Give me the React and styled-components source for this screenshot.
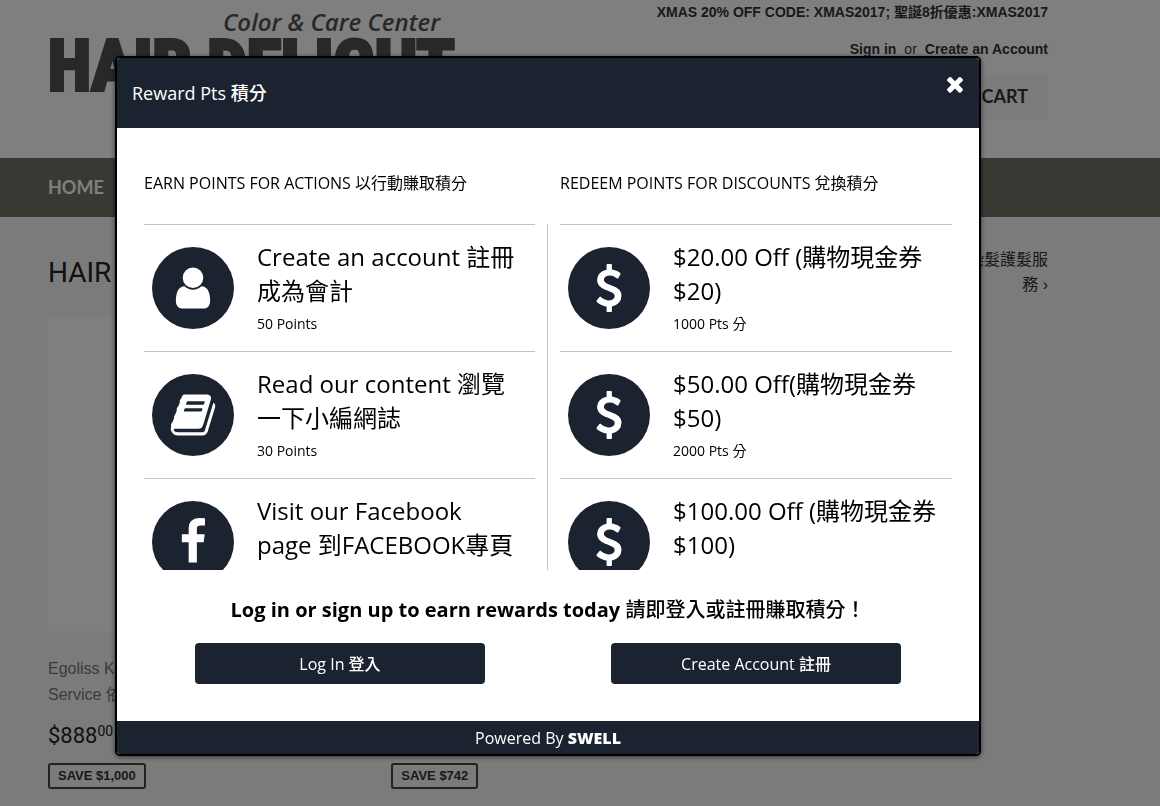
import styled, { createGlobalStyle } from "styled-components";

const GlobalStyle = createGlobalStyle`
  * {
    box-sizing: border-box;
  }
  body {
    margin: 0;
    background: #f6f6f6;
    color: #333;
    font-family: "Liberation Sans", "Noto Sans CJK TC", sans-serif;
    font-size: 16px;
  }
  h1, h2, h3, p, ul {
    margin: 0;
    padding: 0;
  }
  ul {
    list-style: none;
  }
  a {
    color: inherit;
    text-decoration: none;
  }
  button {
    border: 0;
    cursor: pointer;
    font-family: inherit;
  }
`;

/* ---------- shop page ---------- */

const Page = styled.div`
  height: 100vh;
  overflow: hidden;
`;

const Header = styled.header`
  display: flex;
  justify-content: space-between;
  height: 158px;
  padding: 0 112px 0 48px;
  background: #fff;
`;

const Logo = styled.a`
  display: flex;
  flex-direction: column;
  width: 400px;
  padding-top: 4px;
  color: #505050;
  white-space: nowrap;
`;

const LogoTagline = styled.span`
  align-self: flex-end;
  padding-right: 8px;
  font: italic 600 24px/36px "Open Sans", sans-serif;
`;

const LogoName = styled.span`
  font: bold 70px/52px "Roboto Condensed", "Open Sans Condensed", sans-serif;
  -webkit-text-stroke: 4px currentColor;
`;

const HeaderSide = styled.div`
  display: flex;
  flex-direction: column;
  align-items: flex-end;
  font-size: 14px;
  line-height: 24px;
`;

const Promo = styled.p`
  font-weight: bold;
`;

const Account = styled.p`
  display: flex;
  gap: 8px;
  padding: 13px 0 14px;

  a {
    font-weight: bold;
  }
`;

const Cart = styled.a`
  height: 44px;
  padding: 0 20px;
  border-radius: 2px;
  background: #f6f6f6;
  font: bold 18px/42px Lato, sans-serif;
`;

const Nav = styled.nav`
  padding: 0 48px;
  background: #707266;
  color: #fff;
  font: bold 18px/59px Lato, sans-serif;
`;

const Main = styled.main`
  padding: 30px 112px 0 48px;
`;

const SectionHead = styled.div`
  display: flex;
  justify-content: space-between;
  height: 71px;

  h1 {
    font: 28px/52px Roboto, sans-serif;
    color: #222;
  }
  a {
    width: 80px;
    line-height: 25px;
    text-align: right;
  }
`;

const Products = styled.div`
  display: grid;
  grid-template-columns: repeat(3, 1fr);
  gap: 30px;
`;

const Product = styled.article`
  display: flex;
  flex-direction: column;
`;

const Photo = styled.div`
  aspect-ratio: 1;
  margin-bottom: 25px;
  background: #fff;
`;

const ProductName = styled.p`
  width: 96px;
  color: #777;
  line-height: 26px;
  white-space: nowrap;
`;

const Price = styled.p`
  display: flex;
  padding: 11px 0 10px;
  color: #222;
  font: 22px/34px Roboto, sans-serif;

  sup {
    font-size: 14px;
    line-height: 24px;
  }
`;

const Saving = styled.span`
  align-self: flex-start;
  margin-top: auto;
  padding: 0 8px;
  border: 2px solid #444;
  border-radius: 3px;
  font-size: 13px;
  font-weight: bold;
  line-height: 22px;
`;

/* ---------- rewards dialog ---------- */

const Overlay = styled.div`
  position: fixed;
  inset: 0;
  display: flex;
  justify-content: center;
  align-items: flex-start;
  padding: 56px 64px 0 0;
  background: rgba(0, 0, 0, 0.5);
`;

const Dialog = styled.section`
  flex: 0 1 866px;
  border: 2px solid #000;
  border-radius: 5px;
  overflow: hidden;
  background: #fff;
  box-shadow: 0 1px 5px rgba(0, 0, 0, 0.6);
  color: #000;
  font-family: "Open Sans", "Noto Sans CJK TC", sans-serif;
`;

const DialogHead = styled.header`
  display: flex;
  justify-content: space-between;
  align-items: flex-start;
  padding: 14px 12px 14px 15px;
  background: #1c2330;
  color: #fff;

  h2 {
    font-size: 18px;
    font-weight: 500;
    line-height: 42px;
  }
`;

const Close = styled.button`
  display: flex;
  padding: 0;
  background: none;
  color: #fff;
`;

const Columns = styled.div`
  display: grid;
  grid-template-columns: 1fr 1fr;
  padding: 0 15px;
`;

const ColumnTitle = styled.h3`
  padding: 43px 12px 29px;
  font-size: 16px;
  font-weight: normal;
  line-height: 24px;
`;

const List = styled.ul`
  height: 346px;
  padding: 0 12px;
  overflow: hidden;
  border-right: ${(props) => (props.$divided ? "1px solid #c4c4c4" : "0")};
`;

const Row = styled.li`
  display: flex;
  gap: 23px;
  height: 127px;
  padding: 15px 15px 0 8px;
  border-top: 1px solid #c4c4c4;

  h4 {
    margin: 0;
    font-size: 24px;
    font-weight: normal;
    line-height: 34px;
  }
  p {
    font-size: 14px;
    line-height: 32px;
  }
`;

const Badge = styled.span`
  flex: none;
  display: flex;
  align-items: center;
  justify-content: center;
  width: 82px;
  height: 82px;
  margin-top: 7px;
  border-radius: 50%;
  background: #1c2330;
  color: #fff;
`;

const Invite = styled.p`
  padding: 24px 0 18px;
  font-size: 20px;
  font-weight: bold;
  line-height: 31px;
  text-align: center;

  span {
    font-weight: 500;
  }
`;

const Actions = styled.div`
  display: grid;
  grid-template-columns: 1fr 1fr;
  justify-items: center;
  padding: 0 15px 37px;
`;

const Action = styled.button`
  width: 290px;
  padding: 1px 0 0;
  border-radius: 4px;
  background: #1c2330;
  color: #fff;
  font-size: 16px;
  font-weight: 500;
  line-height: 40px;
`;

const DialogFoot = styled.footer`
  padding-top: 1px;
  background: #1c2330;
  color: #fff;
  font-size: 16px;
  line-height: 32px;
  text-align: center;

  b {
    font-weight: 800;
  }
`;

const icons = {
  close:
    "M1490 1322q0 40-28 68l-136 136q-28 28-68 28t-68-28l-294-294-294 294q-28 28-68 28t-68-28l-136-136q-28-28-28-68t28-68l294-294-294-294q-28-28-28-68t28-68l136-136q28-28 68-28t68 28l294 294 294-294q28-28 68-28t68 28l136 136q28 28 28 68t-28 68l-294 294 294 294q28 28 28 68z",
  user: "M1536 1399q0 109-62.5 187t-150.5 78h-854q-88 0-150.5-78t-62.5-187q0-85 8.5-160.5t31.5-152 58.5-131 94-89 134.5-34.5q131 128 313 128t313-128q76 0 134.5 34.5t94 89 58.5 131 31.5 152 8.5 160.5zm-256-887q0 159-112.5 271.5t-271.5 112.5-271.5-112.5-112.5-271.5 112.5-271.5 271.5-112.5 271.5 112.5 112.5 271.5z",
  book: "M1703 478q40 57 18 129l-275 906q-19 64-76.5 107.5t-122.5 43.5h-923q-77 0-148.5-53.5t-99.5-131.5q-24-67-2-127 0-4 3-27t4-37q1-8-3-21.5t-3-19.5q2-11 8-21t16.5-23.5 16.5-23.5q23-38 45-91.5t30-91.5q3-10 .5-30t-.5-28q3-11 17-28t17-23q21-36 42-92t25-90q1-9-2.5-32t.5-28q4-13 22-30.5t22-22.5q19-26 42.5-84.5t27.5-96.5q1-8-3-25.5t-2-26.5q2-8 9-18t18-23 17-21q8-12 16.5-30.5t15-35 16-36 19.5-32 26.5-23.5 36-11.5 47.5 5.5l-1 3q38-9 51-9h761q74 0 114 56t18 130l-274 906q-36 119-71.5 153.5t-128.5 34.5h-869q-27 0-38 15-11 16-1 43 24 70 144 70h923q29 0 56-15.5t35-41.5l300-987q7-22 5-57 38 15 59 43zm-1064 2q-4 13 2 22.5t20 9.5h608q13 0 25.5-9.5t16.5-22.5l21-64q4-13-2-22.5t-20-9.5h-608q-13 0-25.5 9.5t-16.5 22.5zm-83 256q-4 13 2 22.5t20 9.5h608q13 0 25.5-9.5t16.5-22.5l21-64q4-13-2-22.5t-20-9.5h-608q-13 0-25.5 9.5t-16.5 22.5z",
  facebook:
    "M1343 12v264h-157q-86 0-116 36t-30 108v189h293l-39 296h-254v759h-306v-759h-255v-296h255v-218q0-186 104-288.5t277-102.5q147 0 228 12z",
  dollar:
    "M1362 1185q0 153-99.5 263.5t-258.5 136.5v175q0 14-9 23t-23 9h-135q-13 0-22.5-9.5t-9.5-22.5v-175q-66-9-127.5-31t-101.5-44.5-74-48-46.5-37.5-17.5-18q-17-21-2-41l103-135q7-10 23-12 15-2 24 9l2 2q113 99 243 125 37 8 74 8 81 0 142.5-43t61.5-122q0-28-15-53t-33.5-42-58.5-37.5-66-32-80-32.5q-39-16-61.5-25t-61.5-26.5-62.5-31-56.5-35.5-53.5-42.5-43.5-49-35.5-58-21-66.5-8.5-78q0-138 98-242t255-134v-180q0-13 9.5-22.5t22.5-9.5h135q14 0 23 9t9 23v176q57 6 110.5 23t87 33.5 63.5 37.5 39 29 15 14q17 18 5 38l-81 146q-8 15-23 16-14 3-27-7-3-3-14.5-12t-39-26.5-58.5-32-74.5-26-85.5-11.5q-95 0-155 43t-60 111q0 26 8.5 48t29.5 41.5 39.5 33 56 31 60.5 27 70 27.5q53 20 81 31.5t76 35 75.5 42.5 62 50 53 63.5 31.5 76.5 13 94z",
};

const Icon = ({ name, size = 48 }) => (
  <svg
    width={size}
    height={size}
    viewBox="0 0 1792 1792"
    fill="currentColor"
    aria-hidden="true"
  >
    <path d={icons[name]} />
  </svg>
);

const earn = [
  { icon: "user", title: "Create an account 註冊成為會計", points: "50 Points" },
  { icon: "book", title: "Read our content 瀏覽一下小編網誌", points: "30 Points" },
  { icon: "facebook", title: "Visit our Facebook page 到FACEBOOK專頁" },
];

const redeem = [
  { icon: "dollar", title: "$20.00 Off (購物現金券$20)", points: "1000 Pts 分" },
  { icon: "dollar", title: "$50.00 Off(購物現金券$50)", points: "2000 Pts 分" },
  { icon: "dollar", title: "$100.00 Off (購物現金券$100)" },
];

const RewardColumn = ({ title, items, divided }) => (
  <div>
    <ColumnTitle>{title}</ColumnTitle>
    <List $divided={divided}>
      {items.map((item) => (
        <Row key={item.title}>
          <Badge>
            <Icon name={item.icon} />
          </Badge>
          <div>
            <h4>{item.title}</h4>
            {item.points ? <p>{item.points}</p> : null}
          </div>
        </Row>
      ))}
    </List>
  </div>
);

const RewardsDialog = () => (
  <Overlay>
    <Dialog role="dialog" aria-modal="true" aria-labelledby="rewards-title">
      <DialogHead>
        <h2 id="rewards-title">Reward Pts 積分</h2>
        <Close type="button" aria-label="Close">
          <Icon name="close" size={24} />
        </Close>
      </DialogHead>
      <Columns>
        <RewardColumn
          title="EARN POINTS FOR ACTIONS 以行動賺取積分"
          items={earn}
          divided
        />
        <RewardColumn
          title="REDEEM POINTS FOR DISCOUNTS 兌換積分"
          items={redeem}
        />
      </Columns>
      <Invite>
        Log in or sign up to earn rewards today{" "}
        <span>請即登入或註冊賺取積分！</span>
      </Invite>
      <Actions>
        <Action type="button">Log In 登入</Action>
        <Action type="button">Create Account 註冊</Action>
      </Actions>
      <DialogFoot>
        Powered By <b>SWELL</b>
      </DialogFoot>
    </Dialog>
  </Overlay>
);

const App = () => {
  return (
    <>
      <GlobalStyle />
      <Page>
        <Header>
          <Logo href="#">
            <LogoTagline>Color &amp; Care Center</LogoTagline>
            <LogoName>HAIR DELIGHT</LogoName>
          </Logo>
          <HeaderSide>
            <Promo>XMAS 20% OFF CODE: XMAS2017; 聖誕8折優惠:XMAS2017</Promo>
            <Account>
              <a href="#">Sign in</a> or <a href="#">Create an Account</a>
            </Account>
            <Cart href="#">CART</Cart>
          </HeaderSide>
        </Header>
        <Nav>
          <a href="#">HOME</a>
        </Nav>
        <Main>
          <SectionHead>
            <h1>HAIR</h1>
            <a href="#">染髮護髮服務 ›</a>
          </SectionHead>
          <Products>
            <Product>
              <Photo />
              <ProductName>
                Egoliss K
                <br />
                Service 依
              </ProductName>
              <Price>
                $888<sup>00</sup>
              </Price>
              <Saving>SAVE $1,000</Saving>
            </Product>
            <Product>
              <Photo />
              <Saving>SAVE $742</Saving>
            </Product>
          </Products>
        </Main>
      </Page>
      <RewardsDialog />
    </>
  );
};

export default App;
